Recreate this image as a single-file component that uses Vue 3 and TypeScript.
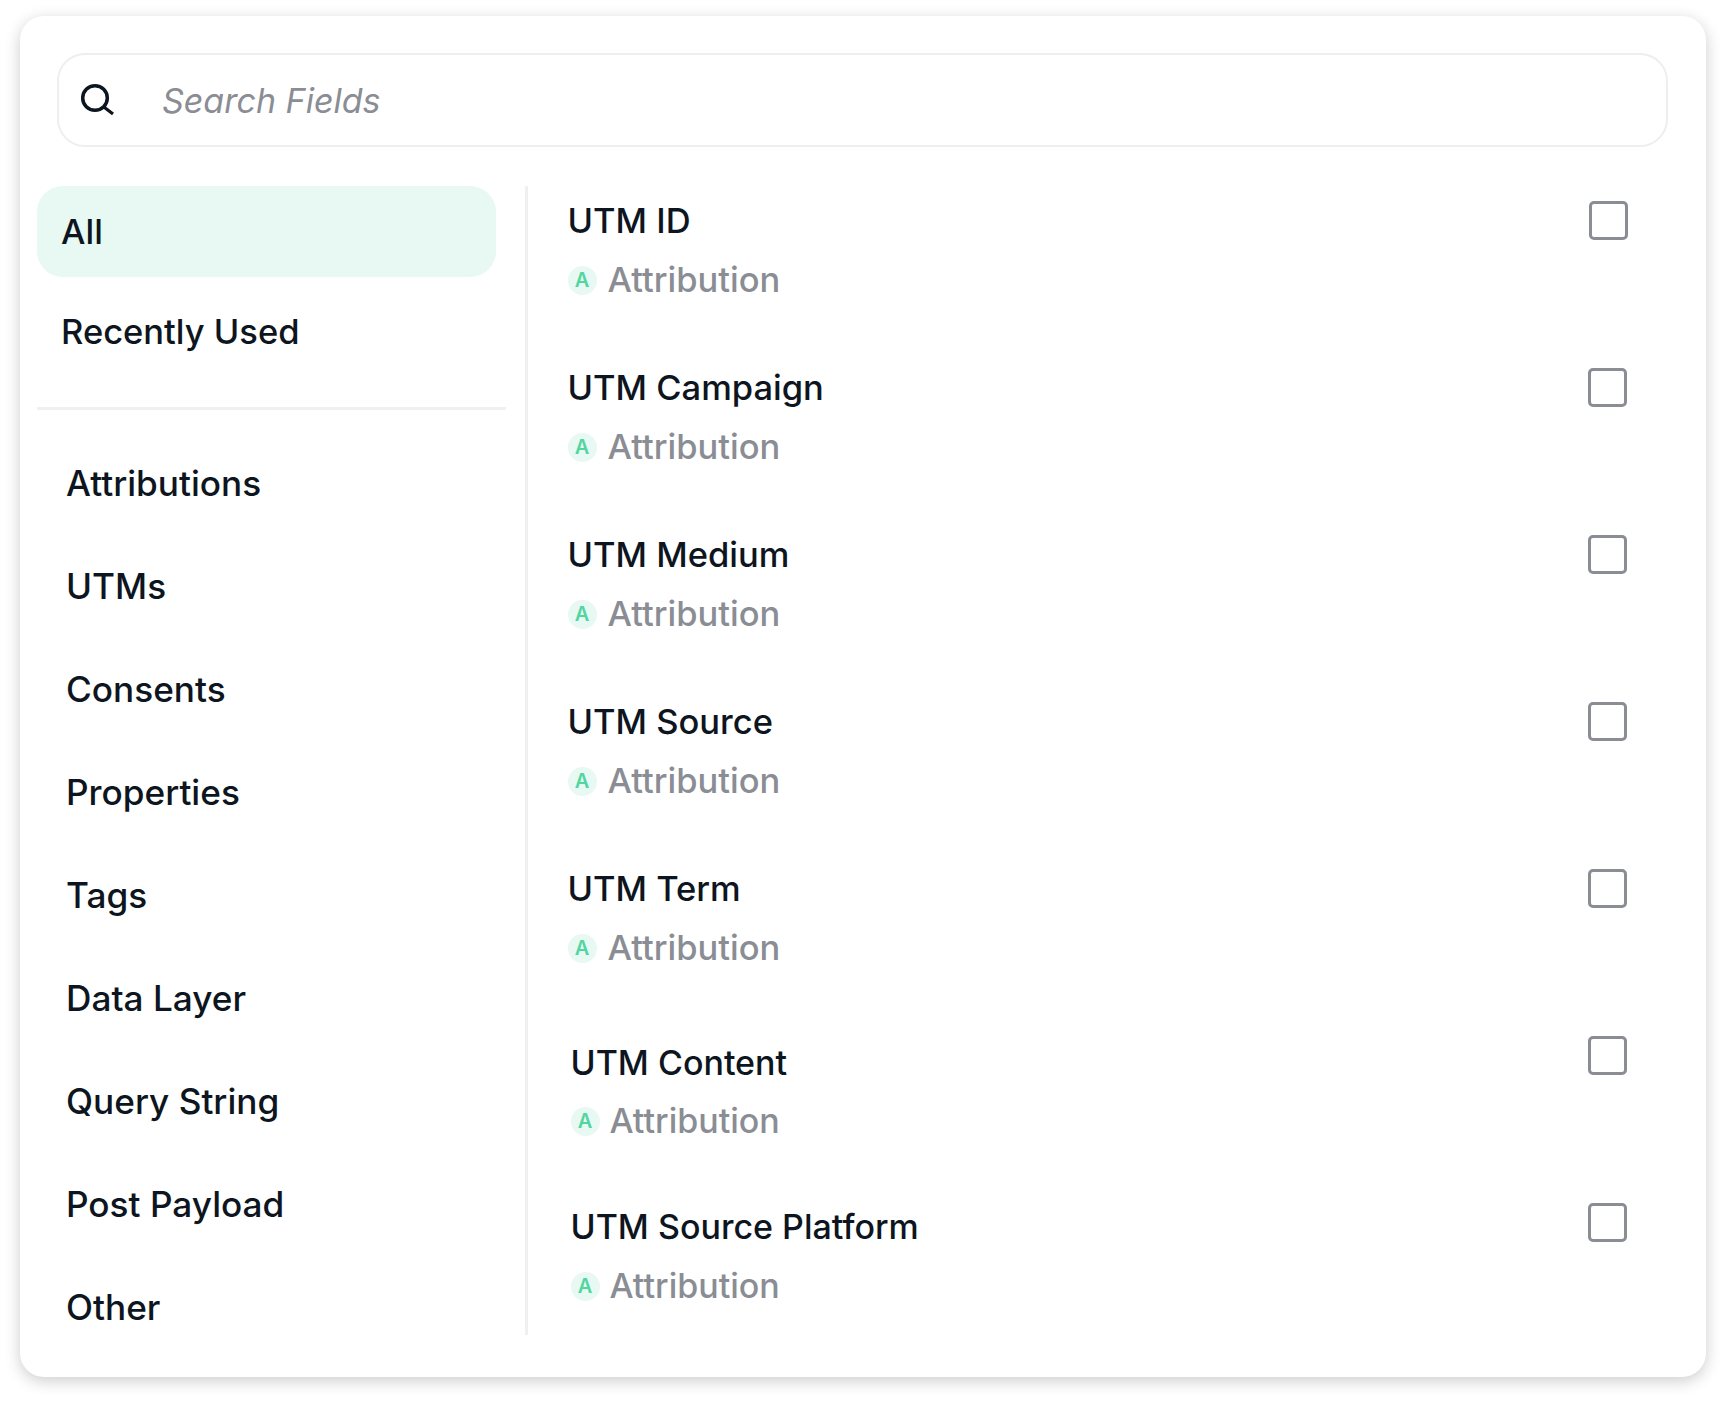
<template>
  <div class="page">
    <div class="card">
      <div class="search">
        <svg class="search-icon" width="34" height="34" viewBox="0 0 34 34" fill="none">
          <circle cx="14" cy="15" r="12.3" stroke="#0d1520" stroke-width="3.5" />
          <path d="M23.5 24.5L32 31" stroke="#0d1520" stroke-width="3.2" />
        </svg>
        <span class="search-text">Search Fields</span>
      </div>
      <div class="body">
        <aside class="side">
          <div class="side-top">
            <div class="top-item active">All</div>
            <div class="top-item">Recently Used</div>
          </div>
          <div class="cats">
            <div v-for="c in categories" :key="c" class="cat">{{ c }}</div>
          </div>
        </aside>
        <main class="fields">
          <div v-for="f in fields" :key="f.name" class="field" :class="f.cls">
            <div class="field-text">
              <div class="field-name">{{ f.name }}</div>
              <div class="field-group">
                <span class="badge">A</span>
                <span>Attribution</span>
              </div>
            </div>
            <span class="check"></span>
          </div>
        </main>
      </div>
    </div>
  </div>
</template>

<script setup lang="ts">
const categories: string[] = [
  'Attributions',
  'UTMs',
  'Consents',
  'Properties',
  'Tags',
  'Data Layer',
  'Query String',
  'Post Payload',
  'Other',
];

const fields: { name: string; cls?: string }[] = [
  { name: 'UTM ID', cls: 'first' },
  { name: 'UTM Campaign' },
  { name: 'UTM Medium' },
  { name: 'UTM Source' },
  { name: 'UTM Term' },
  { name: 'UTM Content', cls: 'shift-a' },
  { name: 'UTM Source Platform', cls: 'shift-b' },
];
</script>

<style>
html,
body {
  background: #fff;
}
</style>

<style scoped>
.page {
  width: 1726px;
  height: 1401px;
  padding: 16px 20px 24px 20px;
  box-sizing: border-box;
  font-family: Inter, "Liberation Sans", sans-serif;
  color: #0d1520;
}

.card {
  height: 1361px;
  box-sizing: border-box;
  background: #fff;
  border-radius: 24px;
  box-shadow: 0 4px 16px rgba(0, 0, 0, 0.2);
  padding: 37px 38px 0 17px;
}

.search {
  height: 94px;
  box-sizing: border-box;
  margin-left: 20px;
  border: 2.5px solid #eeeeef;
  border-radius: 28px;
  display: flex;
  align-items: center;
  padding-left: 21.5px;
}

.search-icon {
  flex: none;
}

.search-text {
  margin-left: 47.5px;
  font-size: 34px;
  font-style: italic;
  color: #8a8d94;
}

.body {
  display: flex;
  margin-top: 39px;
  height: 1149px;
}

.side {
  width: 469px;
  flex: none;
  margin-right: 19px;
}

.side-top {
  height: 224px;
  box-sizing: border-box;
  border-bottom: 3px solid #f0f0f1;
}

.top-item {
  width: 459px;
  height: 91px;
  box-sizing: border-box;
  padding-left: 24px;
  display: flex;
  align-items: center;
  font-size: 34.5px;
  font-weight: 500;
  border-radius: 26px;
}

.top-item.active {
  background: #e8f8f3;
}

.top-item + .top-item {
  margin-top: 9px;
}

.cats {
  padding: 21px 0 0 29px;
}

.cat {
  height: 103.1px;
  display: flex;
  align-items: center;
  font-size: 35.2px;
  font-weight: 500;
}

.fields {
  flex: 1;
  border-left: 3px solid #f0f0f1;
  padding-left: 39.5px;
  padding-right: 41px;
  padding-top: 14px;
}

.field {
  height: 167px;
  display: flex;
  justify-content: space-between;
  align-items: flex-start;
}

.field-text {
  padding-top: 1px;
}

.field-name {
  font-size: 34.5px;
  font-weight: 500;
  line-height: 40px;
}

.field-group {
  display: flex;
  align-items: center;
  gap: 11px;
  margin-top: 19px;
  font-size: 34.5px;
  font-weight: 500;
  line-height: 40px;
  color: #8a8d94;
}

.badge {
  width: 29px;
  height: 29px;
  border-radius: 50%;
  background: #e8f8f3;
  color: #52d6a0;
  font-size: 20px;
  font-weight: 600;
  display: flex;
  align-items: center;
  justify-content: center;
}

.check {
  width: 39px;
  height: 39px;
  margin-top: 1px;
  box-sizing: border-box;
  border: 3px solid #8a8d94;
  border-radius: 5px;
  flex: none;
}

.first .check {
  margin-right: -1px;
}

.shift-a .field-text {
  padding: 8px 0 0 3px;
}

.shift-a .field-group {
  margin-top: 18px;
}

.shift-b .field-text {
  padding: 5px 0 0 3px;
}

.shift-a .field-name,
.shift-b .field-name,
.shift-a .field-group,
.shift-b .field-group {
  font-size: 34px;
}

.shift-a .field-group,
.shift-b .field-group {
  gap: 10px;
}
</style>
